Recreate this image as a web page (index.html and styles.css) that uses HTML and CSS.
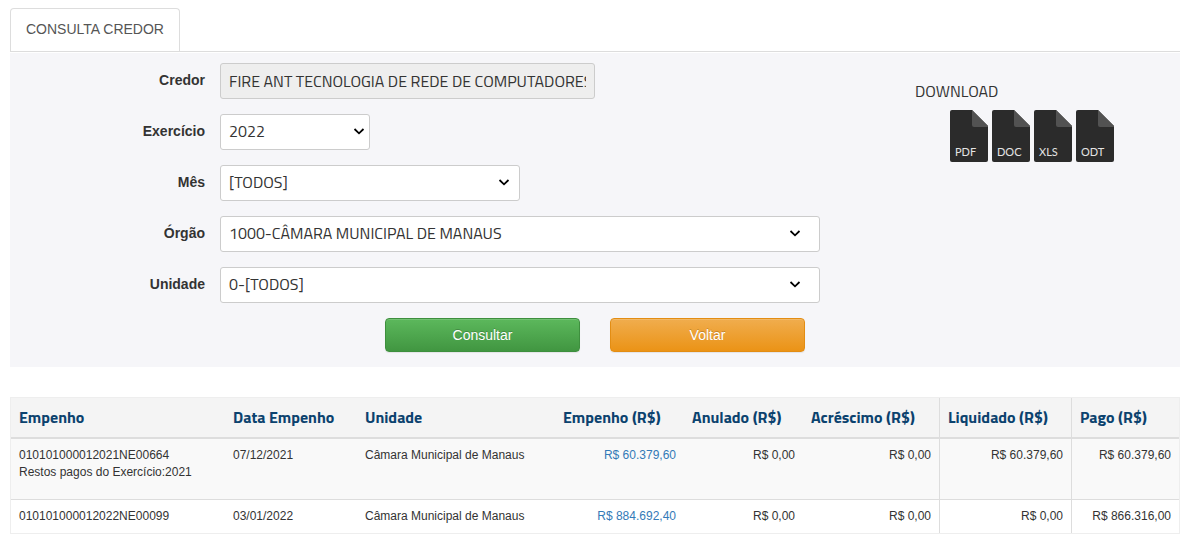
FILE: index.html
```html
<!DOCTYPE html>
<html lang="pt-br">
<head>
    <meta charset="utf-8">
    <title>Consulta Credor</title>
    <link rel="stylesheet" href="styles.css">
</head>
<body>
    <div class="container">
        <nav class="tabs">
            <a class="tab" href="#consulta">CONSULTA CREDOR</a>
        </nav>

        <div class="panel" id="consulta">
            <form class="form">
                <div class="form-group">
                    <label for="credor">Credor</label>
                    <input class="form-control credor" id="credor" type="text" value="FIRE ANT TECNOLOGIA DE REDE DE COMPUTADORES" readonly>
                </div>
                <div class="form-group">
                    <label for="exercicio">Exercício</label>
                    <select class="form-control exercicio" id="exercicio">
                        <option>2022</option>
                    </select>
                </div>
                <div class="form-group">
                    <label for="mes">Mês</label>
                    <select class="form-control mes" id="mes">
                        <option>[TODOS]</option>
                    </select>
                </div>
                <div class="form-group">
                    <label for="orgao">Órgão</label>
                    <select class="form-control" id="orgao">
                        <option>1000-CÂMARA MUNICIPAL DE MANAUS</option>
                    </select>
                </div>
                <div class="form-group">
                    <label for="unidade">Unidade</label>
                    <select class="form-control" id="unidade">
                        <option>0-[TODOS]</option>
                    </select>
                </div>
                <div class="buttons">
                    <button class="btn btn-success" type="button">Consultar</button>
                    <button class="btn btn-warning" type="button">Voltar</button>
                </div>
            </form>

            <div class="download">
                <div class="download-title">DOWNLOAD</div>
                <div class="files">
                    <a href="#pdf">
                        <svg width="38" height="52" viewBox="0 0 38 52">
                            <path d="M2 0H22L38 16V50a2 2 0 0 1-2 2H2a2 2 0 0 1-2-2V2a2 2 0 0 1 2-2z" fill="#2b2b2b"/>
                            <path d="M22 0L38 16V17H24a2 2 0 0 1-2-2z" fill="#525252"/>
                            <text x="5" y="46">PDF</text>
                        </svg>
                    </a>
                    <a href="#doc">
                        <svg width="38" height="52" viewBox="0 0 38 52">
                            <path d="M2 0H22L38 16V50a2 2 0 0 1-2 2H2a2 2 0 0 1-2-2V2a2 2 0 0 1 2-2z" fill="#2b2b2b"/>
                            <path d="M22 0L38 16V17H24a2 2 0 0 1-2-2z" fill="#525252"/>
                            <text x="5" y="46">DOC</text>
                        </svg>
                    </a>
                    <a href="#xls">
                        <svg width="38" height="52" viewBox="0 0 38 52">
                            <path d="M2 0H22L38 16V50a2 2 0 0 1-2 2H2a2 2 0 0 1-2-2V2a2 2 0 0 1 2-2z" fill="#2b2b2b"/>
                            <path d="M22 0L38 16V17H24a2 2 0 0 1-2-2z" fill="#525252"/>
                            <text x="5" y="46">XLS</text>
                        </svg>
                    </a>
                    <a href="#odt">
                        <svg width="38" height="52" viewBox="0 0 38 52">
                            <path d="M2 0H22L38 16V50a2 2 0 0 1-2 2H2a2 2 0 0 1-2-2V2a2 2 0 0 1 2-2z" fill="#2b2b2b"/>
                            <path d="M22 0L38 16V17H24a2 2 0 0 1-2-2z" fill="#525252"/>
                            <text x="5" y="46">ODT</text>
                        </svg>
                    </a>
                </div>
            </div>
        </div>

        <table class="table">
            <colgroup>
                <col class="col-empenho">
                <col class="col-data">
                <col class="col-unidade">
                <col class="col-valor">
                <col class="col-anulado">
                <col class="col-acrescimo">
                <col class="col-liquidado">
                <col class="col-pago">
            </colgroup>
            <thead>
                <tr>
                    <th>Empenho</th>
                    <th>Data Empenho</th>
                    <th>Unidade</th>
                    <th>Empenho (R$)</th>
                    <th>Anulado (R$)</th>
                    <th>Acréscimo (R$)</th>
                    <th class="divider">Liquidado (R$)</th>
                    <th class="divider">Pago (R$)</th>
                </tr>
            </thead>
            <tbody>
                <tr>
                    <td>010101000012021NE00664<p>Restos pagos do Exercício:2021</p></td>
                    <td>07/12/2021</td>
                    <td>Câmara Municipal de Manaus</td>
                    <td class="valor"><a href="#664">R$ 60.379,60</a></td>
                    <td class="valor">R$ 0,00</td>
                    <td class="valor">R$ 0,00</td>
                    <td class="valor divider">R$ 60.379,60</td>
                    <td class="valor divider">R$ 60.379,60</td>
                </tr>
                <tr>
                    <td>010101000012022NE00099</td>
                    <td>03/01/2022</td>
                    <td>Câmara Municipal de Manaus</td>
                    <td class="valor"><a href="#99">R$ 884.692,40</a></td>
                    <td class="valor">R$ 0,00</td>
                    <td class="valor">R$ 0,00</td>
                    <td class="valor divider">R$ 0,00</td>
                    <td class="valor divider">R$ 866.316,00</td>
                </tr>
            </tbody>
        </table>
    </div>
</body>
</html>
```
FILE: styles.css
```css
* {
    box-sizing: border-box;
}

body {
    margin: 0;
    font-family: "Liberation Sans", Arial, sans-serif;
    font-size: 14px;
    line-height: 20px;
    color: #333;
    background: #fff;
}

a {
    color: #337ab7;
    text-decoration: none;
}

.container {
    margin: 8px 24px 0 10px;
}

/* Abas */
.tabs {
    display: flex;
    border-bottom: 1px solid #ddd;
}

.tab {
    padding: 10px 15px 12px;
    border: 1px solid #ddd;
    border-bottom: 0;
    border-radius: 4px 4px 0 0;
    color: #555;
}

/* Formulario */
.panel {
    display: flex;
    gap: 95px;
    padding: 10px 0 15px;
    border-top: 1px solid #fff;
    background: #f6f6f9;
    background-clip: padding-box;
}

.form {
    flex: 0 1 810px;
}

.form-group {
    display: flex;
    gap: 15px;
    margin-bottom: 15px;
}

.form-group label {
    flex: none;
    width: 195px;
    padding-top: 7px;
    font-weight: bold;
    text-align: right;
}

.form-control {
    width: 600px;
    height: 36px;
    padding: 0 8px;
    border: 1px solid #ccc;
    border-radius: 3px;
    background-color: #fff;
    color: #333;
    font-family: "Titillium Web", Roboto, sans-serif;
    font-size: 16px;
    font-weight: 400;
}

select.form-control {
    appearance: none;
    padding-bottom: 2px;
    background-image: url("data:image/svg+xml,%3Csvg xmlns='http://www.w3.org/2000/svg' width='12' height='10'%3E%3Cpath d='M1.5 2L6 6.3L10.5 2' fill='none' stroke='%23000' stroke-width='1.8'/%3E%3C/svg%3E");
    background-repeat: no-repeat;
    background-position: right 18px center;
}

.form-control.credor {
    width: 375px;
    background-color: #eee;
}

.form-control.exercicio {
    width: 150px;
    background-position: right 4px center;
}

.form-control.mes {
    width: 300px;
    background-position: right 9px center;
}

.buttons {
    display: flex;
    justify-content: flex-end;
    gap: 30px;
    padding-right: 15px;
}

.btn {
    width: 195px;
    height: 34px;
    border: 1px solid;
    border-radius: 4px;
    color: #fff;
    font-family: inherit;
    font-size: 14px;
    text-shadow: 0 -1px 0 rgba(0, 0, 0, 0.2);
    box-shadow: inset 0 1px 0 rgba(255, 255, 255, 0.15), 0 1px 1px rgba(0, 0, 0, 0.075);
    cursor: pointer;
}

.btn-success {
    border-color: #3e8f3e;
    background: linear-gradient(#5cb85c, #419641);
}

.btn-warning {
    border-color: #e38d13;
    background: linear-gradient(#f0ad4e, #eb9316);
}

/* Download */
.download {
    padding-top: 18px;
}

.download-title {
    font-family: "Titillium Web", Roboto, sans-serif;
    font-size: 16px;
    font-weight: 400;
}

.files {
    display: flex;
    gap: 4px;
    padding: 9px 0 0 35px;
}

.files svg {
    display: block;
}

.files text {
    fill: #e4e4e4;
    font-family: Lato, sans-serif;
    font-size: 11px;
}

/* Tabela */
.table {
    width: 100%;
    margin-top: 30px;
    border-collapse: separate;
    border-spacing: 0;
    table-layout: fixed;
    border: 1px solid #eee;
    font-size: 12px;
    line-height: 17px;
}

.col-empenho { width: 214px; }
.col-data { width: 132px; }
.col-unidade { width: 198px; }
.col-valor { width: 129px; }
.col-anulado { width: 119px; }
.col-acrescimo { width: 136px; }
.col-liquidado { width: 132px; }
.col-pago { width: 108px; }

.table th {
    height: 41px;
    padding: 0 8px;
    border-bottom: 2px solid #ddd;
    background: #f4f4f4;
    color: #0b426e;
    font-family: "Titillium Web", Roboto, sans-serif;
    font-size: 16px;
    font-weight: bold;
    text-align: left;
    white-space: nowrap;
}

.table td {
    padding: 8px;
    vertical-align: top;
}

.table tr + tr td {
    border-top: 1px solid #ddd;
}

.table p {
    margin: 0 0 10px;
}

.table tbody tr:nth-child(odd) {
    background: #f9f9f9;
}

.table .divider {
    border-left: 1px solid #ddd;
}

.table .valor {
    text-align: right;
}
```
